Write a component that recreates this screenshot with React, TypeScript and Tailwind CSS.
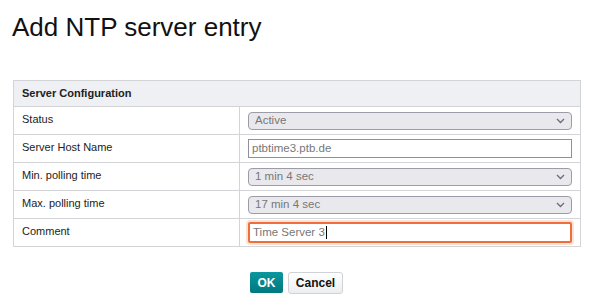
import React from 'react';

const rows = [
  { label: 'Status', kind: 'select', value: 'Active' },
  { label: 'Server Host Name', kind: 'input', value: 'ptbtime3.ptb.de' },
  { label: 'Min. polling time', kind: 'select', value: '1 min 4 sec' },
  { label: 'Max. polling time', kind: 'select', value: '17 min 4 sec' },
  { label: 'Comment', kind: 'focus', value: 'Time Server 3' },
];

const Chevron = () => (
  <svg width="9" height="6" viewBox="0 0 9 6" className="text-[#6b6b78]">
    <path d="M1 1 L4.5 4.5 L8 1" fill="none" stroke="currentColor" strokeWidth="1.3" />
  </svg>
);

export default function App() {
  return (
    <div className="w-[595px] h-[305px] bg-white text-black font-['Liberation_Sans',Arial,sans-serif]">
      <h1 className="pl-[12px] pt-[12px] text-[26px] leading-[30px] text-[#111]">Add NTP server entry</h1>

      <table className="ml-[13px] mt-[38px] w-[568px] border-collapse text-[11px] text-[#222]">
        <thead>
          <tr className="h-[26px] bg-[#eef0f3]">
            <th colSpan={2} className="border border-[#d2d4d8] px-[8px] text-left font-bold">
              Server Configuration
            </th>
          </tr>
        </thead>
        <tbody>
          {rows.map((r) => (
            <tr key={r.label} className="h-[28px]">
              <td className="w-[226px] border border-[#d2d4d8] px-[8px] pb-[3px] align-middle">{r.label}</td>
              <td className="border border-[#d2d4d8] pl-[8px] pr-[8px] align-middle text-[11.5px]">
                {r.kind === 'select' && (
                  <div className="flex h-[18px] items-center justify-between rounded-[4px] border border-[#9c9ca8] bg-[#e9e9ed] pl-[6px] pr-[6px] text-[#777]">
                    <span>{r.value}</span>
                    <Chevron />
                  </div>
                )}
                {r.kind === 'input' && (
                  <div className="flex h-[19px] items-center border border-[#8f8f9d] bg-white pl-[3px] text-[#777]">
                    {r.value}
                  </div>
                )}
                {r.kind === 'focus' && (
                  <div className="flex h-[21px] items-center rounded-[2px] border-2 border-[#ee6f3c] bg-white pl-[3px] text-[#777] shadow-[0_0_0_2px_#fde3d7]">
                    <span>{r.value}</span>
                    <span className="ml-[1px] h-[13px] w-px bg-black" />
                  </div>
                )}
              </td>
            </tr>
          ))}
        </tbody>
      </table>

      <div className="mt-[25px] flex justify-center gap-[5px] pr-[2px]">
        <button className="h-[21px] w-[33px] rounded-[2px] bg-gradient-to-b from-[#0a979e] to-[#00797f] text-[12px] font-bold text-white">
          OK
        </button>
        <button className="h-[22px] w-[55px] rounded-[3px] border border-[#cfd2d6] bg-gradient-to-b from-white to-[#eceef0] text-[12px] font-bold text-[#111]">
          Cancel
        </button>
      </div>
    </div>
  );
}
